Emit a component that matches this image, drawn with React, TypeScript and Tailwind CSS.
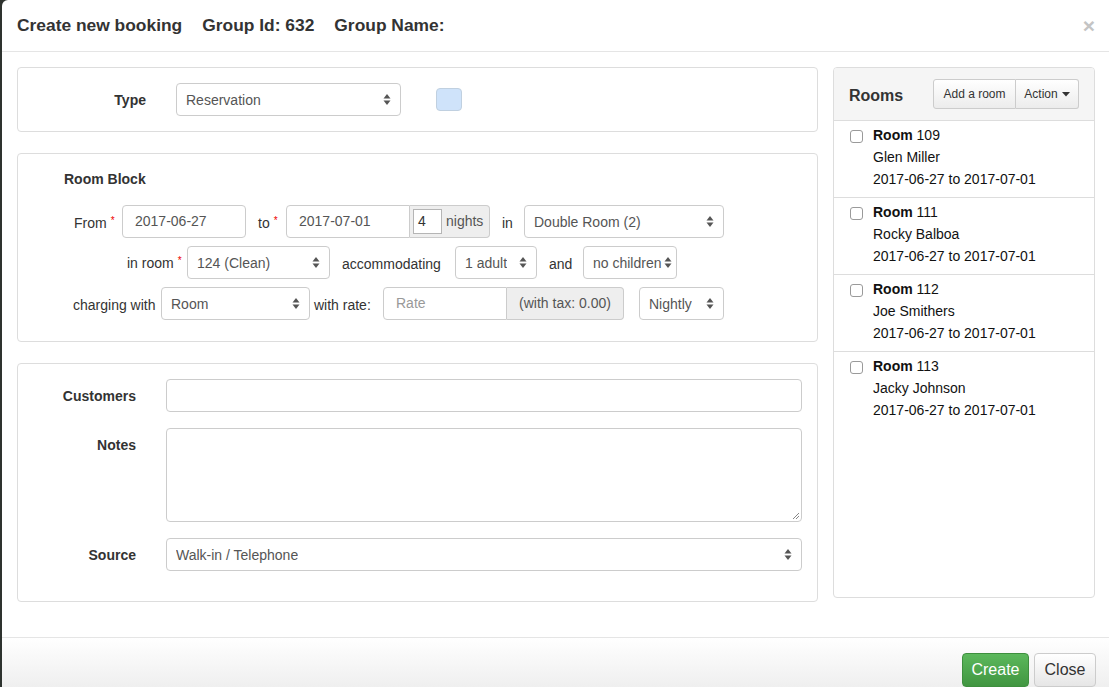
import React from 'react';

const Arrows: React.FC = () => (
  <svg width="8" height="13" viewBox="0 0 8 13" className="shrink-0">
    <path d="M0.5 5.5 L4 1 L7.5 5.5 Z" fill="#555" />
    <path d="M0.5 7.5 L7.5 7.5 L4 12 Z" fill="#555" />
  </svg>
);

interface SelectBoxProps {
  value: string;
  className?: string;
}

const SelectBox: React.FC<SelectBoxProps> = ({ value, className = '' }) => (
  <div
    className={`flex items-center justify-between h-[33px] pl-[9px] pr-[9px] border border-[#ccc] rounded-[4px] bg-white text-[#555] text-[14px] shrink-0 ${className}`}
  >
    <span className="whitespace-nowrap overflow-hidden pt-[2px]">{value}</span>
    <Arrows />
  </div>
);

const TextBox: React.FC<{ value?: string; placeholder?: string; className?: string }> = ({ value, placeholder, className = '' }) => (
  <div className={`flex items-center h-[33px] px-[12px] border border-[#ccc] bg-white text-[14px] shrink-0 ${className}`}>
    {value ? <span className="text-[#555]">{value}</span> : <span className="text-[#999]">{placeholder}</span>}
  </div>
);

const Star: React.FC = () => <span className="text-[#e00] text-[10px] relative -top-[4px] ml-[4px]">*</span>;

const rooms = [
  { no: '109', name: 'Glen Miller' },
  { no: '111', name: 'Rocky Balboa' },
  { no: '112', name: 'Joe Smithers' },
  { no: '113', name: 'Jacky Johnson' },
];

export default function App() {
  return (
    <div className="h-[687px] w-[1109px] overflow-hidden bg-[#2e332f] font-['Liberation_Sans',Arial,sans-serif] text-[14px] text-[#333]">
      <div className="ml-[2px] h-full bg-white rounded-tl-[6px] flex flex-col">
        {/* header */}
        <div className="h-[52px] shrink-0 border-b border-[#e5e5e5] flex items-center pl-[15px] pr-[14px]">
          <div className="flex gap-[20px] text-[17.4px] font-semibold text-[#333] leading-none">
            <span>Create new booking</span>
            <span>Group Id: 632</span>
            <span>Group Name:</span>
          </div>
          <span className="ml-auto text-[21px] font-bold text-[#c4c4c4] leading-none">×</span>
        </div>

        {/* body */}
        <div className="flex-1 flex gap-[15px] pl-[15px] pr-[14px] pt-[15px]">
          <div className="w-[801px] flex flex-col gap-[21px]">
            {/* type panel */}
            <div className="h-[65px] border border-[#ddd] rounded-[4px] flex items-center">
              <span className="w-[128px] text-right font-bold pt-[2px]">Type</span>
              <SelectBox value="Reservation" className="ml-[30px] w-[225px]" />
              <div className="ml-[35px] w-[26px] h-[23px] rounded-[4px] bg-[#cfe3fa] border border-[#c0d0e0]" />
            </div>

            {/* room block panel */}
            <div className="h-[189px] border border-[#ddd] rounded-[4px] pt-[15px]">
              <div className="pl-[46px] font-bold leading-[20px]">Room Block</div>
              <div className="mt-[16px] flex flex-col gap-[8px]">
                <div className="flex items-center">
                  <span className="ml-[56px] w-[48px] whitespace-nowrap pt-[3px]">From<Star /></span>
                  <TextBox value="2017-06-27" className="w-[124px] rounded-[4px]" />
                  <span className="ml-[12px] w-[28px] whitespace-nowrap pt-[3px]">to<Star /></span>
                  <div className="flex w-[204px] h-[33px]">
                    <TextBox value="2017-07-01" className="w-[124px] rounded-l-[4px]" />
                    <div className="w-[80px] h-[33px] bg-[#eee] border border-l-0 border-[#ccc] rounded-r-[4px] flex items-center pl-[3px] text-[#555]">
                      <div className="w-[29px] h-[25px] bg-white border border-[#b5b5b5] flex items-center pl-[4px] text-[#333]">4</div>
                      <span className="ml-[4px]">nights</span>
                    </div>
                  </div>
                  <span className="ml-[12px] w-[22px] pt-[3px]">in</span>
                  <SelectBox value="Double Room (2)" className="w-[200px]" />
                </div>
                <div className="flex items-center">
                  <span className="ml-[109px] w-[60px] whitespace-nowrap pt-[1px]">in room<Star /></span>
                  <SelectBox value="124 (Clean)" className="w-[143px]" />
                  <span className="ml-[12px] w-[113px] pt-[3px]">accommodating</span>
                  <SelectBox value="1 adult" className="w-[82px]" />
                  <span className="ml-[12px] w-[34px] pt-[3px]">and</span>
                  <SelectBox value="no children" className="w-[94px] !pr-[4px]" />
                </div>
                <div className="flex items-center">
                  <span className="ml-[55px] w-[88px] whitespace-nowrap pt-[3px]">charging with</span>
                  <SelectBox value="Room" className="w-[149px]" />
                  <span className="ml-[4px] w-[69px] whitespace-nowrap pt-[3px]">with rate:</span>
                  <div className="flex w-[241px] h-[33px]">
                    <TextBox placeholder="Rate" className="w-[124px] rounded-l-[4px]" />
                    <div className="w-[117px] h-[33px] bg-[#eee] border border-l-0 border-[#ccc] rounded-r-[4px] flex items-center justify-center text-[#555]">
                      (with tax: 0.00)
                    </div>
                  </div>
                  <SelectBox value="Nightly" className="ml-[15px] w-[85px]" />
                </div>
              </div>
            </div>

            {/* customers panel */}
            <div className="h-[239px] border border-[#ddd] rounded-[4px] pt-[15px] flex flex-col gap-[16px]">
              <div className="flex items-center">
                <span className="w-[118px] text-right font-bold pt-[2px]">Customers</span>
                <div className="ml-[30px] w-[636px] h-[33px] border border-[#ccc] rounded-[4px]" />
              </div>
              <div className="flex items-start">
                <span className="w-[118px] text-right font-bold pt-[7px] leading-[20px]">Notes</span>
                <div className="relative ml-[30px] w-[636px] h-[94px] border border-[#ccc] rounded-[4px]">
                  <svg width="8" height="8" viewBox="0 0 8 8" className="absolute right-[1px] bottom-[1px]">
                    <path d="M7 1 L1 7 M7 4 L4 7" stroke="#888" strokeWidth="1" />
                  </svg>
                </div>
              </div>
              <div className="flex items-center">
                <span className="w-[118px] text-right font-bold pt-[2px]">Source</span>
                <SelectBox value="Walk-in / Telephone" className="ml-[30px] w-[636px]" />
              </div>
            </div>
          </div>

          {/* rooms panel */}
          <div className="w-[262px] h-[531px] border border-[#ddd] rounded-[4px] overflow-hidden flex flex-col">
            <div className="h-[53px] shrink-0 bg-[#f5f5f5] border-b border-[#ddd] flex items-center pl-[15px] pr-[15px]">
              <span className="text-[16px] font-bold pt-[4px]">Rooms</span>
              <div className="ml-auto flex h-[30px] text-[12px] text-[#333]">
                <div className="w-[83px] flex items-center justify-center border border-[#ccc] rounded-l-[3px] bg-gradient-to-b from-white to-[#ececec]">
                  Add a room
                </div>
                <div className="w-[63px] flex items-center justify-center gap-[4px] border border-l-0 border-[#ccc] rounded-r-[3px] bg-gradient-to-b from-white to-[#ececec]">
                  Action
                  <svg width="8" height="5" viewBox="0 0 8 5">
                    <path d="M0 0 L8 0 L4 4.5 Z" fill="#333" />
                  </svg>
                </div>
              </div>
            </div>
            {rooms.map((r, i) => (
              <div
                key={r.no}
                className={`h-[77px] flex pl-[16px] pt-[3px] ${i < rooms.length - 1 ? 'border-b border-[#ddd]' : ''}`}
              >
                <div className="w-[13px] h-[13px] mt-[6px] rounded-[3px] border border-[#9a9a9a] bg-white shrink-0" />
                <div className="ml-[10px] leading-[22px] text-[14px] text-[#111]">
                  <div>
                    <span className="font-bold">Room</span> {r.no}
                  </div>
                  <div>{r.name}</div>
                  <div>2017-06-27 to 2017-07-01</div>
                </div>
              </div>
            ))}
          </div>
        </div>

        {/* footer */}
        <div className="h-[50px] shrink-0 border-t border-[#e5e5e5] bg-gradient-to-b from-white to-[#efefef] flex justify-end gap-[5px] pr-[13px] pt-[15px]">
          <div className="w-[67px] h-[34px] rounded-[4px] border border-[#3e8f3e] bg-gradient-to-b from-[#5cb85c] to-[#419641] text-white text-[16px] flex items-center justify-center">
            Create
          </div>
          <div className="w-[62px] h-[34px] rounded-[4px] border border-[#ccc] bg-gradient-to-b from-white to-[#e6e6e6] text-[#333] text-[16px] flex items-center justify-center">
            Close
          </div>
        </div>
      </div>
    </div>
  );
}
